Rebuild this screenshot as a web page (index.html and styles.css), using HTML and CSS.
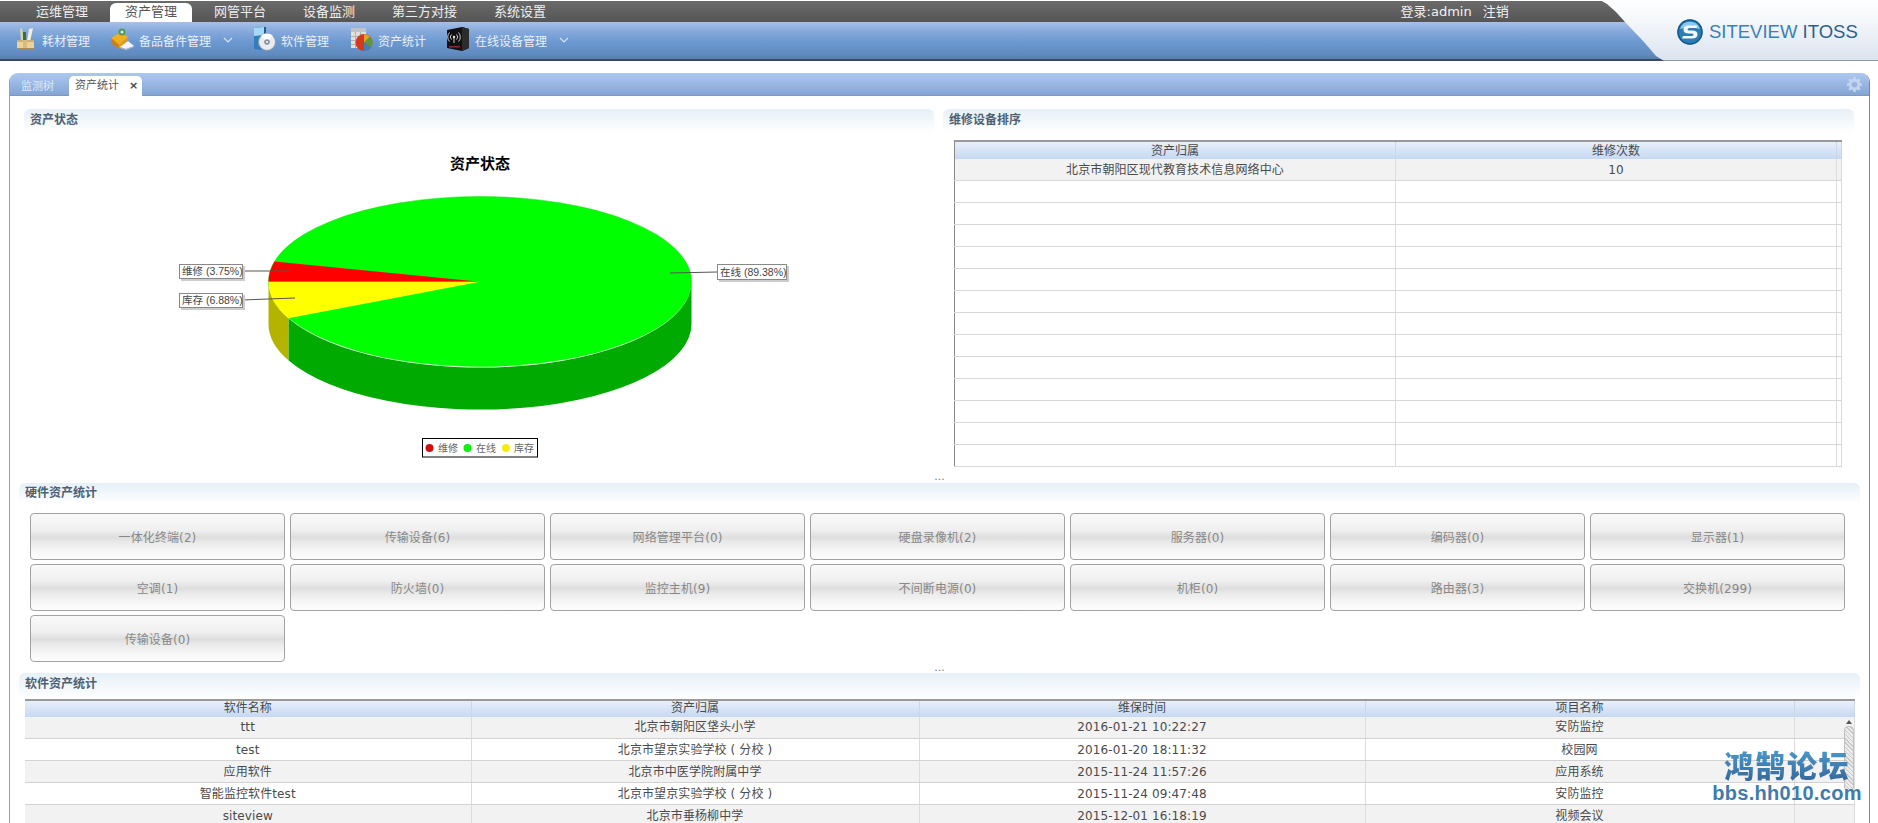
FILE: index.html
```html
<!DOCTYPE html>
<html lang="zh-CN">
<head>
<meta charset="utf-8">
<title>资产统计</title>
<link rel="stylesheet" href="styles.css">
</head>
<body>
<header class="header">
  <nav class="nav">
    <a class="nav-item">运维管理</a>
    <a class="nav-item nav-active">资产管理</a>
    <a class="nav-item">网管平台</a>
    <a class="nav-item">设备监测</a>
    <a class="nav-item">第三方对接</a>
    <a class="nav-item">系统设置</a>
    <div class="user"><span>登录:admin</span><span>注销</span></div>
  </nav>
  <div class="toolbar">
    <a class="tool tool-4c">
      <svg class="ti" viewBox="0 0 24 24">
        <path d="M7 2l2-1 2 13H8z" fill="#cfd6a8"/><path d="M10 5h3v9h-3z" fill="#3d6b3a"/><path d="M14 14l2-12 4-1-3 14z" fill="#f1efe0"/>
        <path d="M4 13h17v10H4z" fill="#ead29a"/><path d="M4 13h17v2H4z" fill="#cdb172"/><path d="M10 13h4v10h-4z" fill="#d8bc7c"/><path d="M4 21h17v2H4z" fill="#a98c52"/>
      </svg>
      <span>耗材管理</span>
    </a>
    <a class="tool tool-6c">
      <svg class="ti" viewBox="0 0 24 24">
        <path d="M1 11l10-6 7 5-9 8z" fill="#f2b01e"/><path d="M1 11l8 7v4l-8-6z" fill="#d07f10"/><path d="M9 18l9-8v3l-9 9z" fill="#e39a16"/>
        <circle cx="12" cy="5" r="3.5" fill="#4f9a55"/><circle cx="12" cy="5" r="1.5" fill="#dfeadf"/>
        <path d="M10 20l8-6 6 5-8 3z" fill="#f3f5f8"/><path d="M10 20l6 2 8-3v1l-8 3-6-2z" fill="#b6c0cc"/>
      </svg>
      <span>备品备件管理</span>
      <svg class="chev" viewBox="0 0 10 6"><path d="M1 1l4 4 4-4" fill="none" stroke="#d5e3f5" stroke-width="1.2"/></svg>
    </a>
    <a class="tool tool-4c">
      <svg class="ti" viewBox="0 0 24 24">
        <path d="M2 1l10-1v23l-10-1z" fill="#2f7fbe"/><path d="M2 1l10-1v8l-10 1z" fill="#a7d8f4"/><path d="M12 0h2v12h-2z" fill="#1c5d92"/>
        <circle cx="15" cy="15" r="8.5" fill="#e8ebf0" stroke="#8c97a6"/><path d="M15 15L9 9a8.5 8.5 0 0 1 12 0z" fill="#fbfcfe"/><circle cx="15" cy="15" r="2.8" fill="#8792a3"/><circle cx="15" cy="15" r="1" fill="#fff"/>
      </svg>
      <span>软件管理</span>
    </a>
    <a class="tool tool-4c">
      <svg class="ti" viewBox="0 0 24 24">
        <path d="M2 1h15v20H2z" fill="#e3e1d6"/><path d="M2 1h15v4H2z" fill="#bfc3c4"/>
        <path d="M6 5h1v16H6zM11 5h1v16h-1zM2 9h15v1H2zM2 13h15v1H2zM2 17h15v1H2z" fill="#aeb2b4"/>
        <circle cx="15" cy="15.5" r="8.5" fill="#d23a1e"/><path d="M15 15.5L21 9.5a8.5 8.5 0 0 1 1 11z" fill="#5a9a3c"/><path d="M15 15.5l7 5a8.5 8.5 0 0 1-7 3.5z" fill="#3f7fbf"/><path d="M15 7a8.5 8.5 0 0 1 6 2.5l-6 6z" fill="#e2a12a"/>
      </svg>
      <span>资产统计</span>
    </a>
    <a class="tool">
      <svg class="ti" viewBox="0 0 24 24">
        <path d="M1 3l15-3 7 2v19l-7 3-15-3z" fill="#111"/><path d="M16 0l7 2v19l-7 3z" fill="#2c2c2c"/>
        <circle cx="8" cy="10" r="1.2" fill="#e6e6e6"/><path d="M5.5 7.5a3.5 3.5 0 0 0 0 5M10.5 7.5a3.5 3.5 0 0 1 0 5M3.5 5.5a6.5 6.5 0 0 0 0 9M12.5 5.5a6.5 6.5 0 0 1 0 9M8 11v5" fill="none" stroke="#ddd" stroke-width=".9"/>
        <path d="M3 19h11v1.5H3z" fill="#8c2b38"/>
      </svg>
      <span>在线设备管理</span>
      <svg class="chev" viewBox="0 0 10 6"><path d="M1 1l4 4 4-4" fill="none" stroke="#d5e3f5" stroke-width="1.2"/></svg>
    </a>
  </div>
  <div class="logo">
    <svg class="logo-mark" viewBox="0 0 26 26">
      <circle cx="13" cy="13" r="12.5" fill="#2b7db5"/>
      <circle cx="13" cy="13" r="12" fill="none" stroke="#14578a" stroke-width="1.5"/>
      <path d="M3 10a10.5 10.5 0 0 1 20 0q-10-3-20 0z" fill="#8cc8ea"/>
      <path d="M20 6.5H11.5Q6.5 6.5 6.5 10.5t5 4h3q2 0 2 1.2t-2 1.3H6l-1 2.5h10q5.5 0 5.5-4t-5.5-4h-3q-1.5 0-1.5-1t1.5-1.5h7.5z" fill="#f3f7fa"/>
    </svg>
    <span class="logo-text"><span class="logo-a">SITEVIEW</span> <span class="logo-b">ITOSS</span></span>
  </div>
</header>

<main class="panel">
  <div class="tabbar">
    <a class="tab">监测树</a>
    <a class="tab tab-active">资产统计<b class="tab-x">×</b></a>
    <svg class="gear" viewBox="0 0 16 16"><path d="M6.8 0h2.4l.4 2.2 1.3.5L12.8 1.5l1.7 1.7-1.2 1.9.5 1.3 2.2.4v2.4l-2.2.4-.5 1.3 1.2 1.9-1.7 1.7-1.9-1.2-1.3.5-.4 2.2H6.8l-.4-2.2-1.3-.5-1.9 1.2-1.7-1.7 1.2-1.9-.5-1.3L0 9.2V6.8l2.2-.4.5-1.3L1.5 3.2l1.7-1.7 1.9 1.2 1.3-.5zM8 5a3 3 0 1 0 0 6 3 3 0 0 0 0-6z" fill="#c3d5ee" fill-rule="evenodd"/></svg>
  </div>

  <div class="top-row">
    <section class="col">
      <h2 class="sec-head">资产状态</h2>
      <svg class="chart" viewBox="24 133 910 333">
        <text class="c-title" x="480" y="169" text-anchor="middle">资产状态</text>
        <path d="M288.4 318.3V360.3A211.5 85.5 0 0 0 691.5 323.7V281.7A211.5 85.5 0 0 1 288.4 318.3Z" fill="#00aa00"/>
        <path d="M268.5 281.7V323.7A211.5 85.5 0 0 0 288.4 360.3V318.3A211.5 85.5 0 0 1 268.5 281.7Z" fill="#b3b300"/>
        <ellipse cx="480" cy="281.5" rx="211.5" ry="85" fill="#00ff00" stroke="#00e000" stroke-width=".5"/>
        <path d="M480 281.7L274.5 261.5A211.5 85.5 0 0 0 268.5 281.7Z" fill="#ff0000"/>
        <path d="M480 281.7H268.5A211.5 85.5 0 0 0 288.4 318.3Z" fill="#ffff00"/>
        <path d="M242 271H290M242 300L295 298M717 272L670 273" stroke="#555" stroke-width="1" fill="none"/>
        <rect class="lb-shadow" x="181" y="266" width="64" height="15"/>
        <rect class="lb" x="179.5" y="264.5" width="63" height="14"/>
        <text class="lb-t" x="182" y="275">维修 (3.75%)</text>
        <rect class="lb-shadow" x="181" y="295" width="64" height="15"/>
        <rect class="lb" x="179.5" y="293.5" width="63" height="14"/>
        <text class="lb-t" x="182" y="304">库存 (6.88%)</text>
        <rect class="lb-shadow" x="719" y="266" width="70" height="16"/>
        <rect class="lb" x="717.5" y="264.5" width="69" height="15"/>
        <text class="lb-t" x="720" y="276">在线 (89.38%)</text>
        <rect x="422.5" y="438.5" width="115" height="18.5" fill="#fff" stroke="#000"/>
        <circle cx="429.5" cy="448" r="4" fill="#cc1111"/>
        <text class="lg-t" x="438" y="452">维修</text>
        <circle cx="467.5" cy="448" r="4" fill="#11ee11"/>
        <text class="lg-t" x="476" y="452">在线</text>
        <circle cx="506" cy="448" r="4" fill="#eeee11"/>
        <text class="lg-t" x="514" y="452">库存</text>
      </svg>
    </section>
    <section class="col">
      <h2 class="sec-head">维修设备排序</h2>
      <div class="rank-wrap">
        <table class="grid rank">
          <thead><tr><th>资产归属</th><th>维修次数</th><th></th></tr></thead>
          <tbody>
            <tr class="alt"><td>北京市朝阳区现代教育技术信息网络中心</td><td>10</td><td></td></tr>
            <tr><td></td><td></td><td></td></tr>
            <tr><td></td><td></td><td></td></tr>
            <tr><td></td><td></td><td></td></tr>
            <tr><td></td><td></td><td></td></tr>
            <tr><td></td><td></td><td></td></tr>
            <tr><td></td><td></td><td></td></tr>
            <tr><td></td><td></td><td></td></tr>
            <tr><td></td><td></td><td></td></tr>
            <tr><td></td><td></td><td></td></tr>
            <tr><td></td><td></td><td></td></tr>
            <tr><td></td><td></td><td></td></tr>
            <tr><td></td><td></td><td></td></tr>
            <tr><td></td><td></td><td></td></tr>
          </tbody>
        </table>
      </div>
    </section>
  </div>

  <div class="split split-a">...</div>

  <section class="wide">
    <h2 class="sec-head sec-wide">硬件资产统计</h2>
    <div class="btn-grid">
      <button class="hw">一体化终端(2)</button>
      <button class="hw">传输设备(6)</button>
      <button class="hw">网络管理平台(0)</button>
      <button class="hw">硬盘录像机(2)</button>
      <button class="hw">服务器(0)</button>
      <button class="hw">编码器(0)</button>
      <button class="hw">显示器(1)</button>
      <button class="hw">空调(1)</button>
      <button class="hw">防火墙(0)</button>
      <button class="hw">监控主机(9)</button>
      <button class="hw">不间断电源(0)</button>
      <button class="hw">机柜(0)</button>
      <button class="hw">路由器(3)</button>
      <button class="hw">交换机(299)</button>
      <button class="hw">传输设备(0)</button>
    </div>
  </section>

  <div class="split split-b">...</div>

  <section class="wide soft">
    <h2 class="sec-head sec-wide sec-soft">软件资产统计</h2>
    <div class="soft-wrap">
      <table class="grid soft-table">
        <thead><tr><th>软件名称</th><th>资产归属</th><th>维保时间</th><th>项目名称</th><th></th></tr></thead>
        <tbody>
          <tr class="alt"><td>ttt</td><td>北京市朝阳区垡头小学</td><td>2016-01-21 10:22:27</td><td>安防监控</td><td></td></tr>
          <tr><td>test</td><td>北京市望京实验学校 ( 分校 )</td><td>2016-01-20 18:11:32</td><td>校园网</td><td></td></tr>
          <tr class="alt"><td>应用软件</td><td>北京市中医学院附属中学</td><td>2015-11-24 11:57:26</td><td>应用系统</td><td></td></tr>
          <tr><td>智能监控软件test</td><td>北京市望京实验学校 ( 分校 )</td><td>2015-11-24 09:47:48</td><td>安防监控</td><td></td></tr>
          <tr class="alt"><td>siteview</td><td>北京市垂杨柳中学</td><td>2015-12-01 16:18:19</td><td>视频会议</td><td></td></tr>
        </tbody>
      </table>
      <div class="scroll"><i class="scroll-up"></i><i class="scroll-thumb"></i></div>
    </div>
  </section>
</main>

<div class="watermark">
  <div class="wm-cn">鸿鹄论坛</div>
  <div class="wm-en">bbs.hh010.com</div>
</div>
</body>
</html>
```

FILE: styles.css
```css
* { box-sizing: border-box; }
html, body { margin: 0; padding: 0; height: 823px; overflow: hidden; background: #fff; }
body {
  position: relative;
  font-family: "DejaVu Sans", "Noto Sans CJK SC", sans-serif;
  font-size: 12px;
  color: #4a4a4a;
}

/* header */
.header { position: relative; height: 61px; padding-top: 1px; }
.nav {
  display: flex;
  align-items: flex-end;
  height: 21px;
  padding-left: 17.5px;
  background: linear-gradient(#6a6a6a, #555);
  font-size: 13px;
  color: #eee;
}
.nav-item {
  height: 19px;
  line-height: 18px;
  padding: 0 18.5px;
  white-space: nowrap;
}
.nav-active {
  margin: 0 3.5px;
  padding: 0 15px;
  background: #fff;
  border-radius: 6px 6px 0 0;
  color: #555;
}
.user {
  display: flex;
  gap: 11px;
  margin-left: 836px;
  height: 19px;
  line-height: 18px;
  color: #f2f2f2;
}
.toolbar {
  display: flex;
  align-items: center;
  height: 39px;
  padding: 0 0 1px 13px;
  background: linear-gradient(#a6c0e9 0, #86a9db 25%, #6b98d0 55%, #5f8abf 90%, #5a80b0 95%);
  border-bottom: 2px solid #3b4a60;
  color: #e9eff8;
}
.tool { display: flex; align-items: center; white-space: nowrap; }
.tool-4c { width: 97px; }
.tool-6c { width: 142px; }
.ti { width: 24px; height: 24px; margin: -2px 5px 0 0; flex: none; }
.chev { width: 10px; height: 6px; margin-left: 12px; flex: none; }

.logo {
  position: absolute;
  right: 0;
  top: 0;
  width: 280px;
  height: 61px;
  padding: 19px 0 0 79px;
  display: flex;
  align-items: flex-start;
  background: linear-gradient(#fff, #f2f6fa 40%, #dbe4ef);
  border-bottom: 1px solid #9098a2;
  clip-path: polygon(2px 0, 100% 0, 100% 100%, 66px 100%, 58px 56px, 46px 42px, 27px 22px, 18px 12px, 9px 4px);
}
.logo-mark { width: 26px; height: 26px; flex: none; }
.logo-text {
  margin: 3px 0 0 6px;
  font-family: "Liberation Sans", sans-serif;
  font-size: 18.5px;
  line-height: 20px;
  white-space: nowrap;
  flex: none;
}
.logo-a { color: #3a80b8; }
.logo-b { color: #2b5f8c; }

/* panel */
.panel {
  margin: 12px 0 0 9px;
  width: 1861px;
  height: 751px;
  border-left: 1px solid #8da2c0;
  border-right: 1px solid #7c8796;
  overflow: hidden;
  border-radius: 9px 9px 0 0;
}
.tabbar {
  display: flex;
  align-items: flex-end;
  position: relative;
  height: 23px;
  padding-left: 12px;
  margin: 0 -1px;
  background: linear-gradient(#acc8ee, #84a5d4);
  border-bottom: 1px solid #7f98be;
  font-size: 11px;
}
.tab { height: 18px; line-height: 19px; color: #dfe9f7; margin-right: 12px; white-space: nowrap; }
.tab-active {
  height: 20px;
  line-height: 20px;
  margin: 0 0 -1px 3px;
  width: 73px;
  padding-left: 6px;
  background: #fff;
  color: #555;
  border-radius: 5px 5px 0 0;
}
.tab-x { margin-left: 10px; color: #444; }
.gear { position: absolute; right: 8px; top: 4px; width: 15px; height: 15px; }

/* sections */
.top-row {
  display: grid;
  grid-template-columns: 910px 911px;
  gap: 9px;
  margin: 13px 0 0 14px;
  width: 1830px;
}
.sec-head {
  margin: 0;
  height: 24px;
  padding: 4px 0 0 6px;
  font-size: 12px;
  line-height: 14px;
  font-weight: 700;
  color: #4d6074;
  background: linear-gradient(#e6f0f7, #fff);
  border-radius: 6px 6px 0 0;
}
.chart { display: block; width: 910px; height: 333px; }
.c-title { font-family: "Noto Sans CJK SC", sans-serif; font-size: 15px; font-weight: 700; fill: #000; }
.lb { fill: #fff; stroke: #888; stroke-width: 1; }
.lb-shadow { fill: #ccc; }
.lb-t { font-family: "Liberation Sans", "Noto Sans CJK SC", sans-serif; font-size: 10.5px; fill: #444; }
.lg-t { font-family: "Noto Sans CJK SC", sans-serif; font-size: 10px; fill: #666; }

/* tables */
.rank-wrap { margin: 7px 0 0 11px; width: 888px; }
.grid { border-collapse: collapse; table-layout: fixed; width: 100%; }
.grid th {
  height: 18px;
  padding: 0;
  font-weight: 400;
  background: linear-gradient(#e8effa, #c6d8f2);
  border-top: 2px solid #999;
  border-right: 1px solid #ccd6e4;
  line-height: 16px;
}
.grid td {
  height: 22px;
  padding: 0;
  text-align: center;
  letter-spacing: .1px;
  border-bottom: 1px solid #d8d8d8;
  border-right: 1px solid #dcdcdc;
  line-height: 20px;
}
.grid .alt td { background: #f2f2f2; }
.rank { border-left: 1px solid #888; border-right: 1px solid #888; border-bottom: 1px solid #888; }
.rank th:nth-child(1), .rank th:nth-child(2) { width: 441px; }
.rank .alt td { height: 20px; line-height: 20px; padding-top: 1px; }

.split {
  text-align: center;
  font-size: 11px;
  line-height: 8px;
  color: #777;
}
.split-a { height: 16px; padding-top: 6px; }
.split-b { height: 11px; padding-top: 2px; }

.wide { margin-left: 9px; width: 1841px; }
.sec-wide { padding-left: 6px; height: 21px; padding-top: 3px; }
.sec-soft { height: 26px; padding-top: 4px; }
.btn-grid {
  display: grid;
  grid-template-columns: repeat(7, 255px);
  grid-auto-rows: 46.5px;
  gap: 4.5px 5px;
  padding: 9px 0 0 11px;
}
.hw {
  font: inherit;
  color: #888;
  letter-spacing: .1px;
  border: 1px solid #a2a2a2;
  border-radius: 4px;
  padding: 0;
  background: linear-gradient(#f9f9f9 0, #f0f0f0 35%, #dedede 52%, #e9e9e9 62%, #f8f8f8 85%, #fdfdfd 100%);
}

.soft-wrap { position: relative; margin-left: 6px; width: 1829px; }
.soft-table th { background: linear-gradient(#e8effa, #c6d8f2); height: 17px; line-height: 15px; }
.soft-table th:nth-child(1) { width: 446px; }
.soft-table th:nth-child(2) { width: 448px; }
.soft-table th:nth-child(3) { width: 446px; }
.soft-table th:nth-child(4) { width: 429px; }
.soft-table th:nth-child(5) { width: 60px; }
.soft-table td { border-bottom-color: #d2d2d2; }
.scroll { position: absolute; right: 0; top: 17px; width: 10px; height: 80px; }
.scroll-up {
  position: absolute;
  left: 2px;
  top: 4px;
  border-left: 3px solid transparent;
  border-right: 3px solid transparent;
  border-bottom: 4px solid #555;
}
.scroll-thumb {
  position: absolute;
  left: 0;
  top: 10px;
  width: 10px;
  height: 65px;
  border: 1px solid #c0c0c0;
  border-radius: 4px;
  background: repeating-linear-gradient(45deg, #c8c8c8 0 1px, #ececec 1px 3px);
}

/* watermark */
.watermark {
  position: absolute;
  left: 1712px;
  top: 745px;
  width: 150px;
  text-align: center;
  color: #3f7cad;
  font-weight: 700;
}
.wm-cn {
  font-family: "Noto Sans CJK SC", sans-serif;
  font-size: 30px;
  font-weight: 900;
  line-height: 38px;
  letter-spacing: 1.5px;
  background: linear-gradient(#4fa0cf, #35659a);
  -webkit-background-clip: text;
  background-clip: text;
  color: transparent;
}
.wm-en {
  font-family: "Liberation Sans", sans-serif;
  font-size: 20px;
  line-height: 21px;
  letter-spacing: .3px;
  white-space: nowrap;
}
```
